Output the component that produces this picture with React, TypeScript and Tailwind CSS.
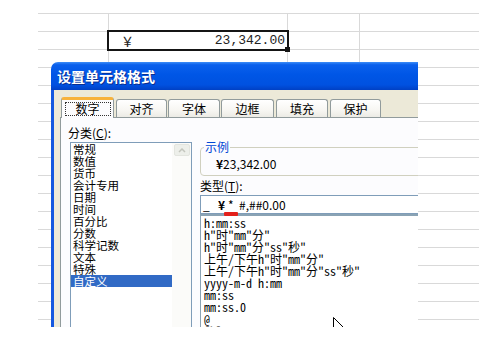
import React from "react";

const leftItems = ["常规", "数值", "货币", "会计专用", "日期", "时间", "百分比", "分数", "科学记数", "文本", "特殊", "自定义"];
const rightItems = [
  'h:mm:ss',
  'h"时"mm"分"',
  'h"时"mm"分"ss"秒"',
  '上午/下午h"时"mm"分"',
  '上午/下午h"时"mm"分"ss"秒"',
  'yyyy-m-d h:mm',
  'mm:ss',
  'mm:ss.0',
  '@',
  '[h]:mm:ss',
];

function Tab({ label, cls }: { label: string; cls: string }) {
  return (
    <div
      className={`h-[18px] border border-b-0 border-[#919B9C] rounded-t-[3px] bg-[linear-gradient(180deg,#FFFFFF_0%,#F7F6F2_60%,#ECEBE5_100%)] flex items-center justify-center text-[12px] leading-[12px] text-black ${cls}`}
    >
      {label}
    </div>
  );
}

export default function App() {
  const rows = Array.from({ length: 18 });
  return (
    <div className="relative w-[479px] h-[345px] bg-white overflow-hidden font-['Noto_Sans_CJK_SC',sans-serif]">
      {/* spreadsheet */}
      <div className="pt-[13px] pl-[38px]">
        <div className="h-[314px] overflow-hidden">
          {rows.map((_, i) => (
            <div key={i} className="flex h-[18px] border-t border-[#D9D9D9]">
              <div className="w-[71px] border-r border-[#D9D9D9]" />
              <div className="w-[179px] border-r border-[#D9D9D9]" />
              <div className="w-[72px] border-r border-[#D9D9D9]" />
              <div className="w-[58px]" />
            </div>
          ))}
        </div>
      </div>

      {/* active cell */}
      <div className="absolute left-[107px] top-[30px] w-[182px] h-[21px] border-2 border-[#151515] bg-white flex items-end justify-between pl-[12px] pr-[2px] text-[#222]">
        <span className="font-['Noto_Sans_CJK_SC',sans-serif] text-[13px] leading-[17px]">￥</span>
        <span className="font-['Liberation_Mono',monospace] text-[13px] leading-[17px]">23,342.00</span>
      </div>
      <div className="absolute left-[285px] top-[47px] w-[5px] h-[5px] bg-[#151515]" />

      {/* dialog */}
      <div className="absolute left-[51px] top-[62px] w-[367px] h-[265px] overflow-hidden rounded-tl-[7px] flex flex-col">
        <div className="h-[28px] shrink-0 bg-[linear-gradient(180deg,#3D8DF7_0%,#0B60EC_10%,#0056E6_45%,#0051E0_82%,#0040C4_100%)] flex items-center pl-[6px]">
          <span className="text-white font-bold text-[14px] leading-[14px] [text-shadow:1px_1px_0_#0B2E8E]">设置单元格格式</span>
        </div>

        <div className="flex-1 flex flex-col bg-[#ECE9D8] border-l-[3px] border-[#1458E0] pl-[6px]">
          {/* tabs */}
          <div className="h-[27px] shrink-0 flex items-end pl-[1px]">
            <div className="relative z-10 -mb-[1px] w-[53px] h-[21px] border-x border-[#919B9C] border-t-[3px] border-t-[#F7B23B] rounded-t-[3px] bg-[#FCFCFE] flex items-center justify-center">
              <div className="w-[46px] h-[14px] border border-dotted border-[#333] flex items-center justify-center text-[12px] leading-[12px]">
                数字
              </div>
            </div>
            <Tab label="对齐" cls="ml-[2px] w-[51px]" />
            <Tab label="字体" cls="ml-[1px] w-[52px]" />
            <Tab label="边框" cls="ml-[1px] w-[53px]" />
            <Tab label="填充" cls="ml-[2px] w-[52px]" />
            <Tab label="保护" cls="ml-[2px] w-[51px]" />
          </div>

          {/* panel */}
          <div className="flex-1 flex border-t border-l border-[#919B9C] bg-[#FCFCFE]">
            {/* left column */}
            <div className="shrink-0 pl-[7px] pt-[9px] flex flex-col">
              <div className="text-[12px] leading-[12px] text-black">
                分类(<span className="underline">C</span>):
              </div>
              <div className="mt-[3px] ml-[2px] w-[122px] h-[200px] border border-[#7F9DB9] bg-white flex">
                <div className="w-[101px] flex flex-col">
                  {leftItems.map((t, i) =>
                    i === leftItems.length - 1 ? (
                      <div key={t} className="h-[12px] leading-[12px] text-[11.5px] pl-[2px] bg-[#316AC5] text-white">
                        {t}
                      </div>
                    ) : (
                      <div key={t} className="h-[12px] leading-[12px] text-[11.5px] pl-[2px] text-black">
                        {t}
                      </div>
                    )
                  )}
                </div>
                <div className="flex-1 bg-[#FBFBF9] flex flex-col items-center pt-[1px]">
                  <div className="w-[16px] h-[12px] rounded-[2px] bg-[#EDEFEA] border border-[#E3E5DF] flex items-center justify-center">
                    <svg width="8" height="5" viewBox="0 0 8 5">
                      <path d="M1 4 L4 1 L7 4" fill="none" stroke="#C4C6BE" strokeWidth="1.5" />
                    </svg>
                  </div>
                </div>
              </div>
            </div>

            {/* right column */}
            <div className="shrink-0 w-[300px] ml-[8px] flex flex-col">
              <div className="relative mt-[29px] h-[29px] border border-[#D0D0BF] rounded-[4px]">
                <span className="absolute left-[3px] -top-[7px] px-[1px] bg-[#FCFCFE] text-[12px] leading-[12px] text-[#0046D5]">
                  示例
                </span>
                <div className="pl-[15px] pt-[10px] text-[12px] leading-[12px] text-black">
                  <span className="font-bold">¥</span>23,342.00
                </div>
              </div>
              <div className="mt-[4px] text-[12px] leading-[12px] text-black">
                类型(<span className="underline">T</span>):
              </div>
              <div className="relative mt-[3px] h-[19px] border border-[#7F9DB9] bg-white flex items-center pl-[2px] text-[12px] leading-[12px] text-black">
                <span className="inline-block w-[15px]">_</span>
                <span className="inline-block w-[10px] font-bold">¥</span>
                <span className="inline-block w-[11px]">*</span>
                <span>#,##0.00</span>
                <div className="absolute left-[23px] top-[16px] w-[14px] h-[4px] rounded-[1px] bg-[#E3201B]" />
              </div>
              <div className="h-[120px] border-l border-t-2 border-[#8AA3B4] bg-white pt-[1px] pl-[3px] flex flex-col font-['Noto_Sans_Mono_CJK_SC','Liberation_Mono','Noto_Sans_CJK_SC',monospace] text-[12px] text-black">
                {rightItems.map((t) => (
                  <div key={t} className="h-[12px] leading-[12px] whitespace-nowrap">
                    {t}
                  </div>
                ))}
              </div>
            </div>
          </div>
        </div>

        {/* mouse cursor */}
        <svg className="absolute left-[282px] top-[255px]" width="13" height="20" viewBox="0 0 13 20">
          <path d="M0.5 0.5 L0.5 16 L4.2 12.4 L7 18.5 L9.2 17.5 L6.5 11.5 L11.5 11.5 Z" fill="#fff" stroke="#000" strokeWidth="1" />
        </svg>
      </div>
    </div>
  );
}
